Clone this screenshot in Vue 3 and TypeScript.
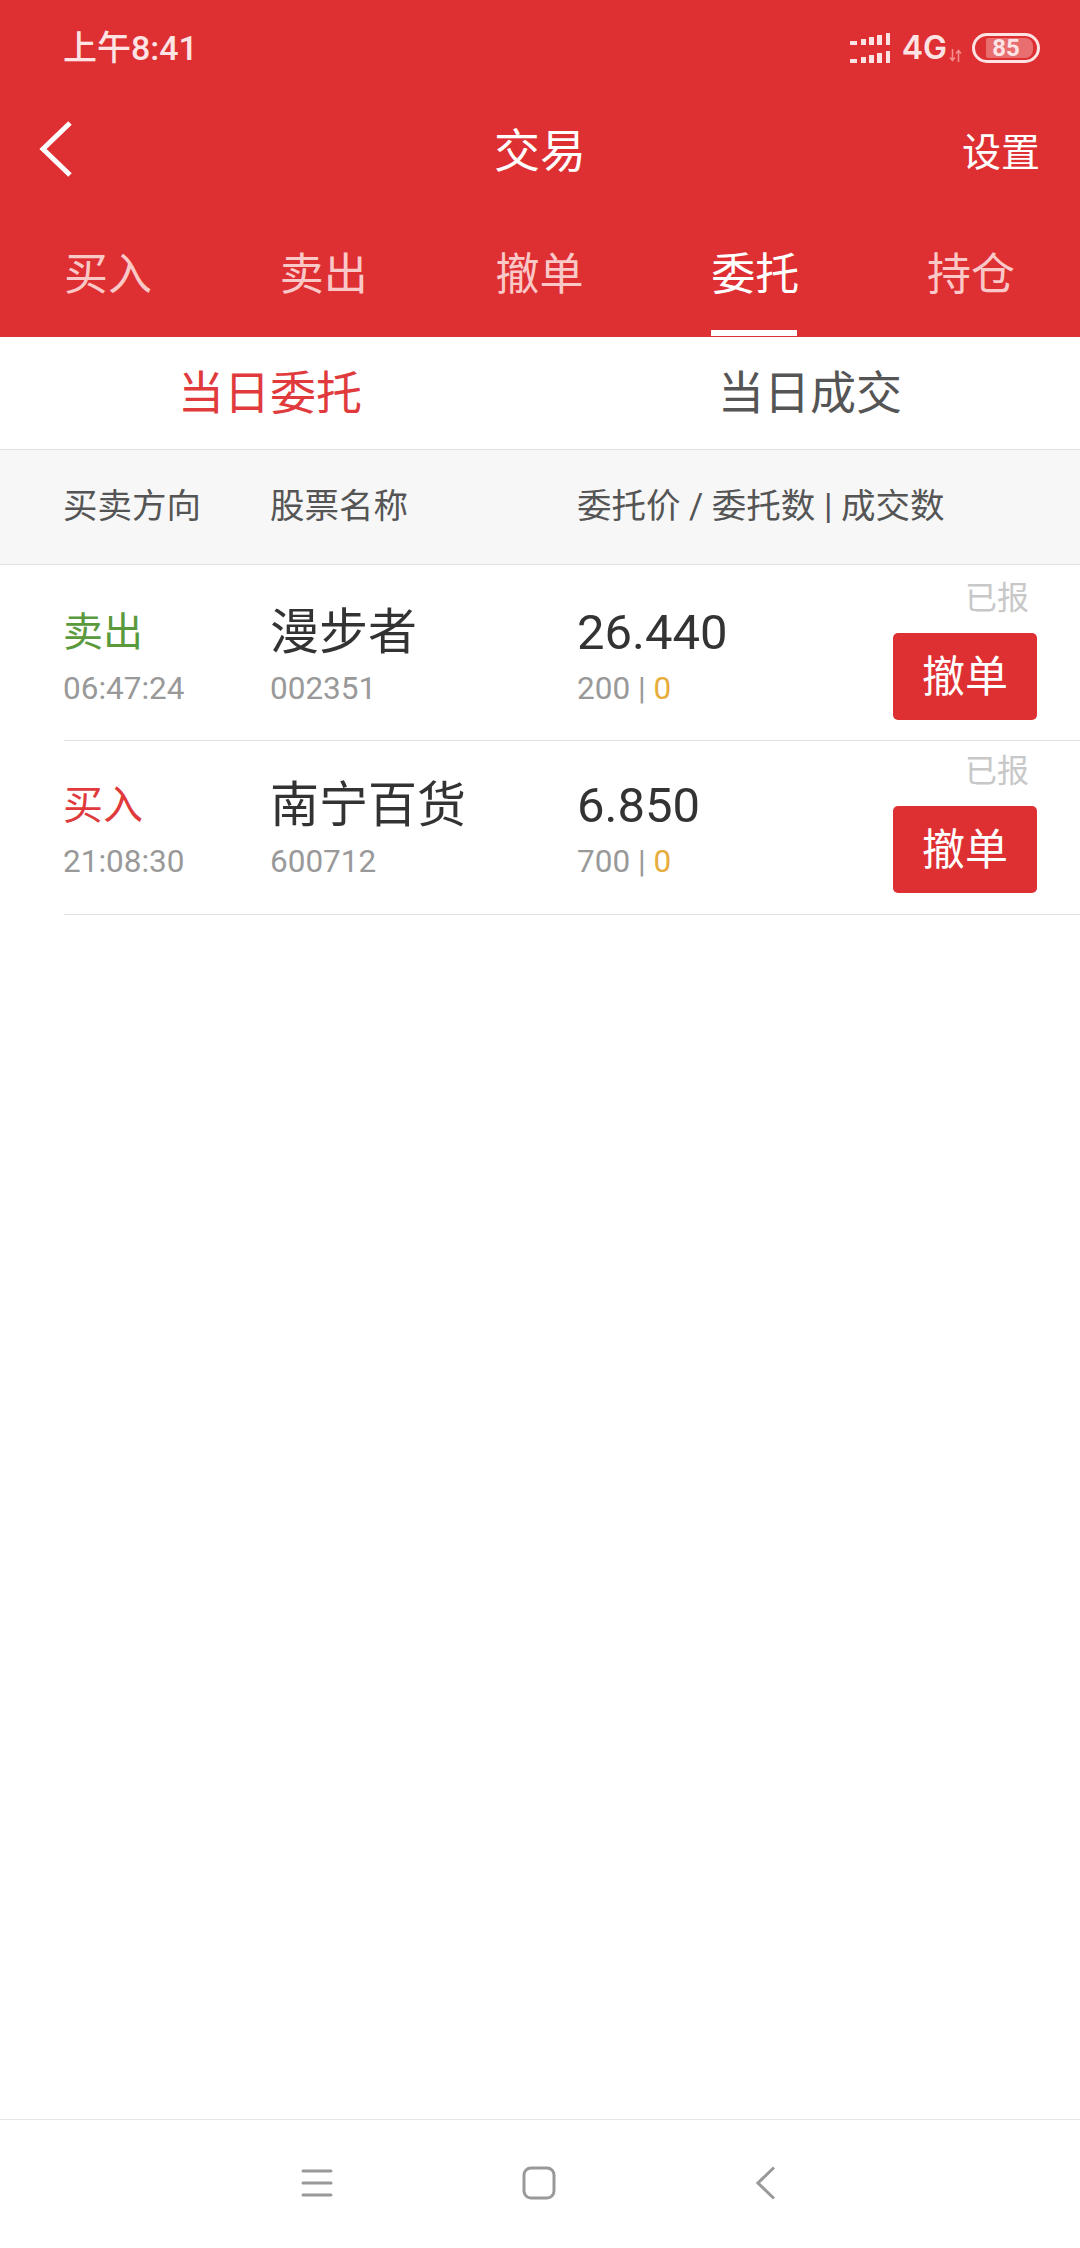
<script setup lang="ts">
interface Order { side: string; sideClass: string; time: string; name: string; code: string; price: string; qty: string; filled: string }
const tabs = ['买入', '卖出', '撤单', '委托', '持仓']
const orders: Order[] = [
  { side: '卖出', sideClass: 'sell', time: '06:47:24', name: '漫步者', code: '002351', price: '26.440', qty: '200', filled: '0' },
  { side: '买入', sideClass: 'buy', time: '21:08:30', name: '南宁百货', code: '600712', price: '6.850', qty: '700', filled: '0' },
]
const bars = [
  { x: 0, w: 7, h: 4 }, { x: 11, w: 5, h: 6 }, { x: 19, w: 5, h: 8 }, { x: 27, w: 5, h: 10 }, { x: 36, w: 4, h: 12 },
]
</script>

<template>
  <div class="page">
    <header class="hero">
      <div class="status">
        <span class="clock">上午8:41</span>
        <div class="status-right">
          <svg class="signal" width="40" height="30" viewBox="0 0 40 30">
            <g fill="#fde3e3">
              <rect v-for="b in bars" :key="'t' + b.x" :x="b.x" :y="12 - b.h" :width="b.w" :height="b.h" />
              <rect v-for="b in bars" :key="'b' + b.x" :x="b.x" :y="30 - b.h" :width="b.w" :height="b.h" />
            </g>
          </svg>
          <span class="net">4G</span>
          <svg class="arrows" width="13" height="13" viewBox="0 0 13 13">
            <path d="M3.500 0v11M1 8.500l2.500 3 2.500-3M9.500 13V2M7 4.500l2.500-3 2.500 3" fill="none" stroke="#f58d8d" stroke-width="1.600" />
          </svg>
          <div class="battery">
            <span class="battery-fill"></span>
            <span class="battery-num">85</span>
          </div>
        </div>
      </div>
      <div class="titlebar">
        <svg class="back" width="36" height="58" viewBox="0 0 36 58">
          <path d="M32 3 L5 29 L32 55" fill="none" stroke="#fff" stroke-width="5" />
        </svg>
        <h1 class="title">交易</h1>
        <span class="settings">设置</span>
      </div>
      <nav class="tabs">
        <div v-for="t in tabs" :key="t" class="tab" :class="{ active: t === '委托' }">{{ t }}</div>
      </nav>
    </header>

    <div class="subtabs">
      <div class="subtab on">当日委托</div>
      <div class="subtab">当日成交</div>
    </div>

    <div class="thead">
      <span class="c1">买卖方向</span>
      <span class="c2">股票名称</span>
      <span class="c3">委托价 / 委托数 | 成交数</span>
    </div>

    <div class="list">
      <div v-for="o in orders" :key="o.code" class="row">
        <div class="c1 cell">
          <div class="side" :class="o.sideClass">{{ o.side }}</div>
          <div class="sub">{{ o.time }}</div>
        </div>
        <div class="c2 cell">
          <div class="big">{{ o.name }}</div>
          <div class="sub">{{ o.code }}</div>
        </div>
        <div class="c3 cell">
          <div class="big">{{ o.price }}</div>
          <div class="sub">{{ o.qty }} | <span class="filled">{{ o.filled }}</span></div>
        </div>
        <div class="act">
          <span class="state">已报</span>
          <button class="cancel">撤单</button>
        </div>
      </div>
    </div>

    <div class="spacer"></div>

    <footer class="navbar">
      <svg class="nav-menu" width="32" height="30" viewBox="0 0 32 30">
        <path d="M2 3h28M2 15h28M2 27h28" stroke="#999" stroke-width="3" stroke-linecap="round" fill="none" />
      </svg>
      <svg class="nav-home" width="34" height="34" viewBox="0 0 34 34">
        <rect x="2" y="2" width="30" height="30" rx="7" fill="none" stroke="#999" stroke-width="3" />
      </svg>
      <svg class="nav-back" width="20" height="34" viewBox="0 0 20 34">
        <path d="M18 1.500 L2 17 L18 32.500" fill="none" stroke="#999" stroke-width="3" />
      </svg>
    </footer>
  </div>
</template>

<style>
html, body { background: #fff; }
</style>

<style scoped>
.page {
  width: 1080px;
  height: 2248px;
  display: flex;
  flex-direction: column;
  background: #fff;
  font-family: Roboto, "Noto Sans CJK SC", sans-serif;
  overflow: hidden;
}
.hero { background: #de3033; color: #fff; height: 337px; display: flex; flex-direction: column; }
.status {
  height: 96px;
  padding: 0 40px 0 63px;
  display: flex;
  justify-content: space-between;
  align-items: center;
}
.clock { font-size: 34px; font-weight: 500; color: #fde3e3; margin-bottom: 5px; }
.status-right { display: flex; align-items: center; }
.signal { margin-right: 12px; }
.net { font-family: Inter, sans-serif; font-size: 32px; font-weight: 600; color: #fde3e3; line-height: 1; }
.arrows { margin: 14px 10px 0 2px; }
.battery {
  width: 68px;
  height: 30px;
  box-sizing: border-box;
  border: 3px solid #fde3e3;
  border-radius: 15px;
  position: relative;
  display: flex;
  align-items: center;
  justify-content: center;
}
.battery-fill {
  position: absolute;
  left: 11px;
  top: 2px;
  bottom: 2px;
  right: 4px;
  background: rgba(255, 255, 255, 0.3);
  border-radius: 2px 8px 8px 2px;
}
.battery-num { position: relative; font-size: 24px; font-weight: 700; color: #fde3e3; line-height: 1; }
.titlebar {
  height: 108px;
  padding: 0 40px 3px 38px;
  box-sizing: border-box;
  display: flex;
  align-items: center;
  justify-content: space-between;
  position: relative;
}
.title {
  margin: 0 0 3px;
  position: absolute;
  left: 0;
  right: 0;
  text-align: center;
  font-size: 46px;
  font-weight: 400;
}
.settings { font-size: 39px; }
.tabs { flex: 1; display: flex; padding-right: 1px; }
.tab {
  flex: 1;
  display: flex;
  align-items: center;
  justify-content: center;
  font-size: 44px;
  color: #fbc8c8;
  position: relative;
}
.tab.active { color: #fff; }
.tab.active::after {
  content: "";
  position: absolute;
  left: 64px;
  width: 86px;
  bottom: 1px;
  height: 6px;
  background: #fff;
}
.subtabs { height: 112px; box-sizing: border-box; padding-bottom: 8px; display: flex; }
.subtab {
  flex: 1;
  display: flex;
  align-items: center;
  justify-content: center;
  font-size: 46px;
  color: #555;
}
.subtab.on { color: #e03a3c; }
.thead {
  height: 116px;
  box-sizing: border-box;
  background: #f7f7f7;
  border-top: 1px solid #e0e0e0;
  border-bottom: 1px solid #e0e0e0;
  display: flex;
  align-items: center;
  padding: 0 0 8px 63px;
  font-size: 34.5px;
  color: #555;
}
.c1 { width: 207px; flex: none; }
.c2 { width: 307px; flex: none; }
.c3 { flex: none; }
.list { padding-left: 64px; }
.row {
  height: 176px;
  box-sizing: border-box;
  border-bottom: 1px solid #e0e0e0;
  display: flex;
  position: relative;
}
.row + .row { height: 174px; }
.cell { display: flex; flex-direction: column; padding-top: 36px; box-sizing: border-box; margin-left: -1px; margin-right: 1px; }
.row + .row .cell { padding-top: 33px; }
.big { font-size: 49px; line-height: 64px; color: #333; height: 64px; }
.side { font-size: 40px; line-height: 64px; height: 64px; }
.sell { color: #5a9a3d; }
.buy { color: #e03a3c; }
.sub { font-size: 31.5px; line-height: 48px; color: #999; }
.filled { color: #e7ad3c; }
.act {
  position: absolute;
  right: 43px;
  top: 0;
  display: flex;
  flex-direction: column;
  align-items: flex-end;
}
.state { font-size: 32px; line-height: 44px; margin: 11px 8px 13px 0; color: #c8c8c8; }
.row + .row .state { margin: 8px 8px 13px 0; }
.cancel {
  width: 144px;
  height: 87px;
  border: 0;
  border-radius: 5px;
  background: #de3033;
  color: #fff;
  font: inherit;
  font-size: 43px;
  padding: 0 0 8px;
}
.spacer { flex: 1; }
.navbar {
  height: 129px;
  box-sizing: border-box;
  border-top: 1px solid #e6e6e6;
  display: flex;
  align-items: center;
  padding: 0 0 2px 301px;
}
.nav-home { margin-left: 189px; }
.nav-back { margin-left: 200px; }
</style>
